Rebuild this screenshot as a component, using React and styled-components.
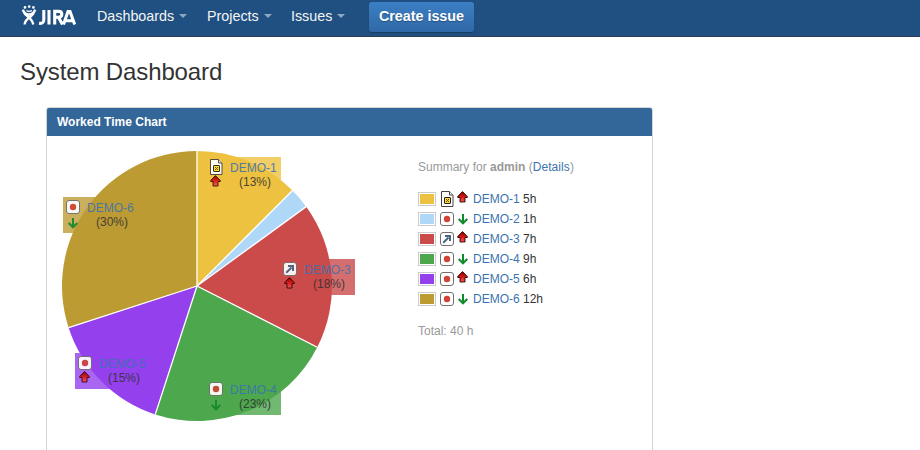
import React from 'react';
import styled, { createGlobalStyle } from 'styled-components';

const Global = createGlobalStyle`
  * { box-sizing: border-box; }
  body { margin: 0; background: #fff; color: #333; font: 12px/14px "Liberation Sans", Arial, sans-serif; overflow: hidden; }
`;
const Page = styled.div`height: 450px; overflow: hidden;`;
const Header = styled.header`
  display: flex; align-items: flex-start; height: 37px; padding-left: 20px;
  background: #205081; border-bottom: 1px solid #2e3d54; color: #f5f5f5;
`;
const Logo = styled.svg`display: block; width: 58px; height: 28px; margin-right: 19px; flex: none;`;
const NavItem = styled.a`
  display: flex; align-items: center; gap: 5px; width: ${p => p.$w}px; height: 32px; font-size: 14.3px; white-space: nowrap;
  &::after { content: ""; border: 4px solid transparent; border-top-color: #8fa7c0; border-bottom: 0; }
`;
const CreateButton = styled.button`
  height: 30px; width: 105px; margin: 2px 0 0 1px; padding: 0 0 2px; border: 0; border-radius: 3px;
  background: linear-gradient(#3b7fc4, #3068a6); box-shadow: 0 1px 1px rgba(0,0,0,.25);
  color: #fff; font: bold 14.3px "Liberation Sans", sans-serif; white-space: nowrap; text-shadow: 0 1px 1px rgba(0,0,0,.3);
`;
const Title = styled.h1`margin: 20px 0 20px 20px; font-size: 24px; line-height: 30px; font-weight: normal; letter-spacing: -.12px;`;
const Gadget = styled.section`
  width: 607px; height: 400px; margin-left: 46px; border: 1px solid #d5d5d5; border-radius: 3px; overflow: hidden;
`;
const GadgetTitle = styled.h2`
  margin: 0; padding: 0 10px; height: 28px; line-height: 28px; background: #336699; color: #fff; font-size: 12px;
`;
const Content = styled.div`display: flex;`;
const Chart = styled.div`position: relative; width: 371px; height: 314px; flex: none;`;
const Pie = styled.svg`display: block; width: 371px; height: 314px;`;
const SliceLabel = styled.div`
  position: absolute; left: ${p => p.$x}px; top: ${p => p.$y}px; width: 74px; height: 36px;
  display: flex; background: ${p => p.$bg}cc;
`;
const LabelIcons = styled.div`display: flex; flex-direction: column; width: ${p => p.$inset + 22}px; padding-left: ${p => p.$inset}px; padding-top: 2px; opacity: .92; svg { flex: none; }`;
const LabelText = styled.div`padding-top: 4px; opacity: .88; white-space: nowrap;`;
const Percent = styled.div`padding-left: 9px;`;
const Link = styled.a`color: #3b73af;`;
const Summary = styled.div`padding-top: 24px; color: #999;`;
const Details = styled(Link)`letter-spacing: .08px;`;
const Legend = styled.ul`list-style: none; margin: 15px 0 15px; padding: 0; color: #333;`;
const LegendRow = styled.li`display: flex; align-items: center; height: 20px; white-space: pre;`;
const Swatch = styled.span`
  width: 18px; height: 14px; margin-right: 3px; border: 1px solid #ccc; padding: 1px; background: ${p => p.$bg} content-box;
`;
const Icon = styled.svg`display: block; width: 16px; height: 16px; flex: none;`;
const PriorityIcon = styled(Icon)`margin-right: 2px; margin-top: ${p => p.$up ? -4 : 0}px;`;
const LabelPriority = styled(PriorityIcon)`margin-top: ${p => p.$up ? -2 : 0}px;`;

const data = [
  { n: 1, h: 5, pct: 13, color: '#edc240', type: 'doc', up: true, x: 160, y: 21, inset: 1 },
  { n: 2, h: 1, color: '#afd8f8', type: 'bug' },
  { n: 3, h: 7, pct: 18, color: '#cb4b4b', type: 'arrow', up: true, x: 234, y: 123, inset: 1 },
  { n: 4, h: 9, pct: 23, color: '#4da74d', type: 'bug', x: 160, y: 243, inset: 1 },
  { n: 5, h: 6, pct: 15, color: '#9440ed', type: 'bug', up: true, x: 28, y: 217, inset: 2 },
  { n: 6, h: 12, pct: 30, color: '#bd9b33', type: 'bug', x: 16, y: 61, inset: 2 },
];
const TOTAL = 40;

function TypeIcon({ type }) {
  if (type === 'doc') return (
    <Icon viewBox="0 0 16 16">
      <path d="M2.5.5h8l3.5 3.5v11.5h-11.5z" fill="#fff" stroke="#444" />
      <path d="M10.5.5v3.5h3.5" fill="#eee" stroke="#444" />
      <rect x="5.5" y="6.5" width="6" height="6" rx=".5" fill="#ffdc28" stroke="#222" />
      <path d="M7 8l3 3M10 8l-3 3" stroke="#6b4a00" />
    </Icon>
  );
  return (
    <Icon viewBox="0 0 16 16">
      <rect x="1.5" y="1.5" width="13" height="13" rx="2.5" fill="#fff" stroke="#707070" />
      {type === 'bug'
        ? <circle cx="8" cy="8" r="3.2" fill="#d04437" />
        : <path d="M4.2 11.8L9.5 6.5M6 5h5v5" fill="none" stroke="#4a6785" strokeWidth="2" />}
    </Icon>
  );
}
function Priority({ up, as: Shape = PriorityIcon }) {
  return (
    <Shape viewBox="0 0 16 16" $up={up}>
      {up ? <>
        <defs><linearGradient id="up" x1="0" x2="0" y1="0" y2="1"><stop offset="0" stopColor="#800" /><stop offset=".5" stopColor="#d51717" /><stop offset="1" stopColor="#ff5555" /></linearGradient></defs>
        <path d="M7.5 2.6L12.3 7.5v1H10v4.5H5v-4.5H2.7v-1z" fill="url(#up)" stroke="#200" strokeWidth=".9" />
      </> : <path d="M8 3v9.2M3.7 8L8 12.3 12.3 8" fill="none" stroke="#14892c" strokeWidth="2" />}
    </Shape>
  );
}
function slicePath(from, to) {
  const pt = v => {
    const a = v / TOTAL * Math.PI * 2;
    return `${150 + 135 * Math.sin(a)} ${150 - 135 * Math.cos(a)}`;
  };
  return `M150 150L${pt(from)}A135 135 0 0 1 ${pt(to)}Z`;
}
function JiraLogo() {
  return (
    <Logo viewBox="0 0 58 28" fill="none" stroke="#fff">
      <g fill="#fff" stroke="none"><circle cx="5" cy="7.4" r="1.3" /><circle cx="9.2" cy="6.6" r="1.3" /><circle cx="13.4" cy="7.4" r="1.3" /></g>
      <path d="M2.9 9.6C4 13.6 6 14.7 9 14.5S14.2 12.6 15.2 9.6M4.6 24.5C5 20 8 18.2 10.5 16.7S13.5 13.5 14.5 11M3.8 12C5 16 12.5 18 13.2 24.5" strokeWidth="2.4" />
      <path d="M6.5 10.6Q9 12 12 10.6" strokeWidth="1.3" />
      <path d="M23.8 10v10q0 4-4.8 3.2M29 10v14.5M34.7 24.5V11.4h3.8q3.3 0 3.3 2.9t-3.3 2.9h-3.8M38.3 17l4.2 7.5M43.5 24.5l4.5-13h2l4.7 13M46 20.8h7" strokeWidth="3.1" />
    </Logo>
  );
}

export default function App() {
  let sum = 0;
  const slices = data.map(d => { const from = sum; sum += d.h; return { ...d, from, to: sum }; });
  return (
    <Page>
      <Global />
      <Header>
        <JiraLogo />
        <NavItem $w={110}>Dashboards</NavItem>
        <NavItem $w={84}>Projects</NavItem>
        <NavItem $w={77}>Issues</NavItem>
        <CreateButton>Create issue</CreateButton>
      </Header>
      <Title>System Dashboard</Title>
      <Gadget>
        <GadgetTitle>Worked Time Chart</GadgetTitle>
        <Content>
          <Chart>
            <Pie viewBox="0 0 371 314">
              {slices.map(s => <path key={s.n} d={slicePath(s.from, s.to)} fill={s.color} />)}
              {slices.map(s => {
                const a = s.from / TOTAL * Math.PI * 2;
                return <path key={s.n} d={`M150 150L${150 + 135 * Math.sin(a)} ${150 - 135 * Math.cos(a)}`} stroke="#fff" strokeWidth="1.3" />;
              })}
            </Pie>
            {data.filter(d => d.pct).map(d => (
              <SliceLabel key={d.n} $x={d.x} $y={d.y} $bg={d.color}>
                <LabelIcons $inset={d.inset}><TypeIcon type={d.type} /><Priority up={d.up} as={LabelPriority} /></LabelIcons>
                <LabelText><Link>DEMO-{d.n}</Link><Percent>({d.pct}%)</Percent></LabelText>
              </SliceLabel>
            ))}
          </Chart>
          <Summary>
            Summary for <b>admin</b> (<Details>Details</Details>)
            <Legend>
              {data.map(d => (
                <LegendRow key={d.n}>
                  <Swatch $bg={d.color} /><TypeIcon type={d.type} /><Priority up={d.up} /><Link>DEMO-{d.n}</Link>{` ${d.h}h`}
                </LegendRow>
              ))}
            </Legend>
            Total: {TOTAL} h
          </Summary>
        </Content>
      </Gadget>
    </Page>
  );
}
